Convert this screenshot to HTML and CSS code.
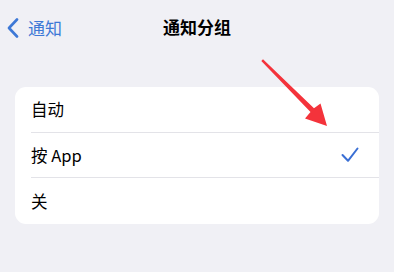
FILE: index.html
```html
<!DOCTYPE html>
<html lang="zh">
<head>
<meta charset="utf-8">
<link rel="stylesheet" href="styles.css">
</head>
<body>
<div class="screen">
  <header class="nav">
    <div class="back">
      <svg class="chev" width="12" height="20" viewBox="0 0 12 20"><polyline points="10,1.5 2,10 10,18.5" fill="none" stroke="#3d78d6" stroke-width="2.6" stroke-linecap="round" stroke-linejoin="round"/></svg>
      <span class="back-text">通知</span>
    </div>
    <h1 class="title">通知分组</h1>
  </header>
  <section class="card">
    <div class="row"><span class="label">自动</span></div>
    <div class="row"><span class="label">按 App</span>
      <svg class="check" width="18" height="16" viewBox="0 0 18 16"><polyline points="1.5,8 7,13.8 16.5,1.5" fill="none" stroke="#3a6fd4" stroke-width="2" stroke-linecap="round" stroke-linejoin="round"/></svg>
    </div>
    <div class="row"><span class="label">关</span></div>
  </section>
  <svg class="arrow" width="394" height="272" viewBox="0 0 394 272">
    <polygon points="263,59.3 314,108.3 320.5,103.5 327,126 305,118.5 310.5,112 261.3,61" fill="#f4333b"/>
  </svg>
</div>
</body>
</html>
```
FILE: styles.css
```css
html, body {
  margin: 0;
  padding: 0;
}
body {
  background: #f0f0f5;
  font-family: "Noto Sans CJK SC", "Noto Sans", sans-serif;
  color: #000;
}
.screen {
  position: relative;
  width: 394px;
  height: 272px;
  overflow: hidden;
}
.nav {
  position: relative;
  height: 56px;
  display: flex;
  align-items: center;
  justify-content: center;
}
.back {
  position: absolute;
  left: 7px;
  top: 18px;
  display: flex;
  align-items: center;
  gap: 9px;
  height: 20px;
}
.chev {
  display: block;
}
.back-text {
  font-size: 17px;
  color: #3d78d6;
  line-height: 20px;
}
.title {
  margin: 0;
  font-size: 17px;
  font-weight: 700;
  line-height: 20px;
  margin-top: 0;
  position: relative;
  top: -1px;
}
.card {
  margin: 31px 15px 0 15px;
  background: #fff;
  border-radius: 11px;
  padding-left: 16px;
}
.row {
  height: 45.5px;
  display: flex;
  align-items: center;
  justify-content: space-between;
  padding-right: 20px;
  border-bottom: 1px solid #e3e3e8;
  box-sizing: border-box;
}
.row:last-child {
  border-bottom: none;
}
.label {
  font-size: 16.5px;
  line-height: 20px;
}
.check {
  display: block;
}
.arrow {
  position: absolute;
  left: 0;
  top: 0;
  pointer-events: none;
}
```
